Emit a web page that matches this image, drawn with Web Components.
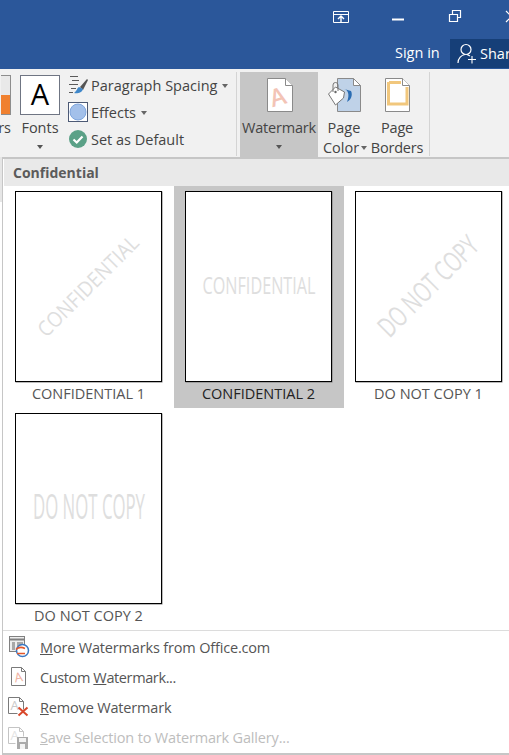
<!DOCTYPE html>
<html lang="en"><head><meta charset="utf-8"><title>Watermark</title>
<style>
html,body{margin:0;padding:0;height:755px;width:509px;overflow:hidden;background:#fff;font-family:"Open Sans","Noto Sans",sans-serif;color:#444}
</style></head><body>
<app-shell>
  <title-bar></title-bar>
  <ribbon-bar></ribbon-bar>
  <wm-menu>
    <wm-thumb slot="gallery" label="CONFIDENTIAL 1" text="CONFIDENTIAL" diag></wm-thumb>
    <wm-thumb slot="gallery" label="CONFIDENTIAL 2" text="CONFIDENTIAL" selected></wm-thumb>
    <wm-thumb slot="gallery" label="DO NOT COPY 1" text="DO NOT COPY" diag></wm-thumb>
    <wm-thumb slot="gallery" label="DO NOT COPY 2" text="DO NOT COPY"></wm-thumb>
    <menu-row slot="items" icon="more"><u>M</u>ore Watermarks from Office.com</menu-row>
    <menu-row slot="items" icon="custom" style="letter-spacing:-.38px">Custom <u>W</u>atermark...</menu-row>
    <menu-row slot="items" icon="remove"><u>R</u>emove Watermark</menu-row>
    <menu-row slot="items" icon="save" disabled><u>S</u>ave Selection to Watermark Gallery...</menu-row>
  </wm-menu>
</app-shell>
<script>
function def(name,html){
  customElements.define(name,class extends HTMLElement{
    connectedCallback(){
      if(this.shadowRoot)return;
      const r=this.attachShadow({mode:'open'});
      r.innerHTML=typeof html==='function'?html(this):html;
    }
  });
}
def('app-shell',`<style>:host{display:flex;flex-direction:column;width:509px;height:755px;overflow:hidden;background:linear-gradient(#e6e6e6 202px,#fff 202px)}</style><slot></slot>`);

def('title-bar',`<style>
:host{display:flex;flex-direction:column;height:69px;background:#2b579a;color:#fff;flex:none;overflow:hidden}
.ctl{height:39px;display:flex;align-items:flex-start;flex:none}
.ctl svg{display:block;flex:none}
.acc{height:29px;display:flex;align-items:stretch;padding-left:395px;flex:none}
.sign{width:55px;font-size:14.5px;line-height:28px;white-space:nowrap}
.share{width:59px;background:#163f78;display:flex;align-items:center;overflow:hidden;font-size:14.5px;white-space:nowrap;padding-left:7px;box-sizing:border-box;gap:3px}
.share svg{flex:none}
</style>
<div class="ctl">
<svg width="509" height="39" viewBox="0 0 509 39" fill="none" stroke="#fff">
<path d="M333.500 11.500h15v11h-15zM333.500 14.500h15" stroke-width="1"/>
<path d="M341 22v-6M338 19l3-3 3 3" stroke-width="1.400"/>
<path d="M392 19.500h12" stroke-width="2"/>
<path d="M449.500 14.500h8v7h-8zM452.500 14v-3.500h8v7H458" stroke-width="1.200"/>
<path d="M506 11l11 11M517 11l-11 11" stroke-width="1.200"/>
</svg></div>
<div class="acc"><div class="sign">Sign in</div>
<div class="share"><svg width="20" height="21" viewBox="0 0 20 21" fill="none" stroke="#fff" stroke-width="1.200"><circle cx="9" cy="6.500" r="5"/><path d="M1 20c0-5 3.500-8 7-8.500M10 11.500l3 1.500"/><path d="M11 16.500h8M15 13v7.500" stroke-width="1.100"/></svg><span>Share</span></div></div>`);

def('ribbon-bar',`<style>
:host{display:flex;height:88px;flex:none;background:#f1f1f1;box-sizing:border-box;padding-top:3px;color:#444;overflow:hidden;font-size:14.5px}
.colors{width:11px;flex:none;display:flex;flex-direction:column;align-items:flex-end}
.sw{width:10px;height:40px;margin:3px 0 0;box-sizing:border-box;border:1px solid #8d8d8d;border-left:0;background:linear-gradient(#e9e9e9 50%,#f0802f 50%);flex:none}
.colors span{line-height:20px;margin-top:3px}
.fonts{margin-left:9px;width:40px}
.fontbox{width:40px;height:40px;box-sizing:border-box;border:1px solid #6f7583;background:#fff;color:#000;font-size:29px;line-height:36px;text-align:center}
.list{margin-left:8px;width:168px;flex:none}
.sep{width:1px;height:84px;background:#d4d4d4;flex:none}
.wm{margin-left:3px;width:78px;background:#c6c6c6;letter-spacing:-.2px}
.pc{width:52px}.pb{width:50px;margin-left:2px;letter-spacing:-.2px}
</style>
<div class="colors"><div class="sw"></div><span>rs</span></div>
<rb-btn class="fonts" caret2 top="3"><div class="fontbox" slot="icon">A</div>Fonts</rb-btn>
<div class="list">
<small-btn icon="para" caret>Paragraph Spacing</small-btn>
<small-btn icon="fx" caret>Effects</small-btn>
<small-btn icon="def">Set as Default</small-btn>
</div>
<div class="sep"></div>
<rb-btn class="wm" caret2 top="6"><svg slot="icon" width="34" height="34" viewBox="0 0 34 34"><path d="M5.500.5h18l7 7v26h-25z" fill="#fff" stroke="#8a8a8a"/><path d="M23.500.5v7h7" fill="#fff" stroke="#8a8a8a"/><text x="16" y="27" font-family="Open Sans" font-size="24" fill="#f3c4b6" font-weight="600" transform="rotate(-16 17 20)" text-anchor="middle">A</text></svg>Watermark</rb-btn>
<rb-btn class="pc" top="6"><svg slot="icon" width="40" height="34" viewBox="0 0 40 34"><path d="M13.500.5h16l7 7v26h-23z" fill="#bfd2e8" stroke="#8a8a8a"/><path d="M29.500.5v7h7z" fill="#fff" stroke="#8a8a8a"/><path d="M20 11c4 1 6 5 3 13 4-2 6-7 4-11z" fill="#2b6db3"/><path d="M4.500 16l7-7 9 5-1 6-8 7z" fill="#fff" stroke="#777"/><path d="M9 14V7a2.500 2.500 0 0 1 5 0v6" fill="none" stroke="#777"/><circle cx="11.500" cy="14" r="1.200" fill="#666"/></svg>Page<br>Color<i style="display:inline-block;width:0;height:0;border:3.500px solid transparent;border-top:4px solid #666;border-bottom:0;margin-left:2px;margin-right:-2px;vertical-align:3px"></i></rb-btn>
<rb-btn class="pb" top="6"><svg slot="icon" width="27" height="34" viewBox="0 0 27 34"><path d="M1.500.5h17l7 7v26h-24z" fill="#fff" stroke="#8a8a8a"/><path d="M18.500.5v7h7" fill="#fff" stroke="#8a8a8a"/><path d="M5 4.500h12M23 9v17H4.500V4" fill="none" stroke="#f1c77d" stroke-width="3"/></svg>Page<br>Borders</rb-btn>
<div class="sep" style="margin-left:7px"></div>`);

def('rb-btn',el=>`<style>
:host{display:flex;flex-direction:column;align-items:center;flex:none;height:85px;box-sizing:border-box;padding-top:${el.getAttribute('top')||6}px;text-align:center;line-height:20px;white-space:nowrap}
.i{height:${el.getAttribute('top')==='3'?43:40}px;flex:none;display:block}
.i ::slotted(svg){display:block}
.t{display:block}
.c{display:block;width:0;height:0;border:3.500px solid transparent;border-top:4px solid #555;border-bottom:0;margin-top:7px}
</style><span class="i"><slot name="icon"></slot></span><span class="t"><slot></slot></span>${el.hasAttribute('caret2')?'<span class="c"></span>':''}`);

const smallIcons={
para:`<svg width="21" height="22" viewBox="0 0 21 22"><path d="M2 1.500h8M4 5.500h7M1 9.500h9M3 13.500h5M1 17.500h4" stroke="#5a5a5a" fill="none"/><path d="M12 12l7-8 1 1-5 10z" fill="#555"/><path d="M11 12c-2 1-2 4-5 6 3 1 8 0 9-4z" fill="#3f87c9"/></svg>`,
fx:`<svg width="21" height="21" viewBox="0 0 21 21"><rect x=".5" y=".5" width="19" height="19" fill="#fff" stroke="#4d5a75"/><circle cx="10" cy="10" r="8" fill="#a3c0ea" stroke="#7ea5dd"/></svg>`,
def:`<svg width="21" height="21" viewBox="0 0 21 21"><circle cx="10" cy="10" r="9" fill="#5ba187"/><path d="M5.500 10.500l3.200 3 5.800-6" fill="none" stroke="#fff" stroke-width="2.200"/></svg>`};
def('small-btn',el=>`<style>
:host{display:flex;align-items:center;height:27px;gap:2px;white-space:nowrap;font-size:14.5px}
svg{display:block;flex:none}.ic{width:21px;flex:none}
.c{width:0;height:0;border:3.500px solid transparent;border-top:4px solid #666;border-bottom:0;margin-left:3px}
</style><span class="ic">${smallIcons[el.getAttribute('icon')]}</span><span><slot></slot></span>${el.hasAttribute('caret')?'<span class="c"></span>':''}`);

def('wm-menu',`<style>
:host{display:flex;flex-direction:column;flex:1;min-height:0;background:#fff;margin-left:2px;border-left:1px solid #c6c6c6;border-top:2px solid #c6c6c6;border-bottom:2px solid #c6c6c6;width:600px;box-sizing:border-box;color:#444}
.h{height:27px;background:#e9e9e9;font-weight:700;font-size:14px;line-height:27px;padding-left:9px;color:#5b5b5b;margin-left:1px;box-sizing:border-box;flex:none}
.g{display:grid;grid-template-columns:repeat(3,170px);grid-auto-rows:222px;padding-left:1px;flex:none;height:444px}
.s{height:1px;background:#dcdcdc;flex:none}
.l{padding-top:1px;flex:none}
</style><div class="h">Confidential</div><div class="g"><slot name="gallery"></slot></div><div class="s"></div><div class="l"><slot name="items"></slot></div>`);

def('wm-thumb',el=>{
  const t=el.getAttribute('text'),d=el.hasAttribute('diag'),conf=t[0]==='C';
  const fs=conf?(d?21:24):(d?28:35),len=conf?(d?133:113):(d?129:112);
  const cy=d?94:(conf?93:92),cx=d?72:73;
  const tr=d?` transform="rotate(-45 ${cx} ${cy})"`:'';
  return `<style>
:host{display:block;box-sizing:border-box;padding:5px 0 0 11px;height:222px;width:170px;${el.hasAttribute('selected')?'background:#c6c6c6;color:#222;':'color:#555;'}}
.p{width:147px;height:191px;box-sizing:border-box;border:1px solid #000;background:#fff;box-shadow:.5px .5px 0 #777}
svg{display:block;overflow:visible}
.l{width:147px;font-size:14.5px;line-height:22px;white-space:nowrap;margin-top:1px;display:flex;justify-content:center}
</style><div class="p"><svg width="145" height="189" viewBox="0 0 145 189"><text x="${cx}" y="${cy+fs*.36}" text-anchor="middle" font-family="Open Sans" font-size="${fs}" fill="#dedede" textLength="${len}" lengthAdjust="spacingAndGlyphs"${tr}>${t}</text></svg></div><div class="l">${el.getAttribute('label')}</div>`;
});

const rowIcons={
more:`<svg width="22" height="22" viewBox="0 0 22 22"><rect x="1.500" y=".5" width="15" height="15" fill="#eee" stroke="#808080"/><path d="M2 3.500h14" stroke="#808080" stroke-width="2"/><path d="M4 6h3v8H4zM9 6h6v6H9z" fill="#a8a8a8"/><circle cx="14.500" cy="14.500" r="6" fill="#fff" stroke="#3a78c2" stroke-width="1.500"/><path d="M8 13.500c2-2 5-3 9-1M9 17.500h8" stroke="#e2572b" fill="none" stroke-width="1.500"/></svg>`,
custom:`<svg width="22" height="22" viewBox="0 0 22 22"><path d="M3.500 1.500h10l4 4v14h-14z" fill="#fff" stroke="#7a7a7a"/><path d="M13.500 1.500v4h4" fill="none" stroke="#7a7a7a"/><text x="10.500" y="16" font-family="Open Sans" font-size="13" fill="#f0b09e" text-anchor="middle" transform="rotate(-10 10 12)">A</text></svg>`,
remove:`<svg width="22" height="24" viewBox="0 0 22 24"><path d="M.5 2.500h11l4 4v8M.5 2.500v16h9M11.500 2.500v4h4" fill="none" stroke="#7a7a7a"/><text x="6.500" y="15" font-family="Open Sans" font-size="13" fill="#c9c9c9" text-anchor="middle">A</text><path d="M10.500 12.500l9 8M19.500 12.500l-9 8" stroke="#d9482b" stroke-width="2"/></svg>`,
save:`<svg width="22" height="24" viewBox="0 0 22 24"><path d="M.5 2.500h11l4 4v5M.5 2.500v16h7M11.500 2.500v4h4" fill="none" stroke="#c4c4c4"/><text x="6.500" y="15" font-family="Open Sans" font-size="13" fill="#e3e3e3" text-anchor="middle">A</text><path d="M9 12h11v12H9z" fill="#aaa"/><path d="M11 13h7v4h-7zM12 19h5v5h-5z" fill="#f3f3f3"/></svg>`};
def('menu-row',el=>`<style>
:host{display:flex;align-items:center;height:30px;white-space:nowrap;font-size:14.5px;letter-spacing:-.17px;color:${el.hasAttribute('disabled')?'#bdbdbd':'#555'}}
.ic{width:37px;flex:none;padding-left:5px;box-sizing:border-box}
svg{display:block}
</style><span class="ic">${rowIcons[el.getAttribute('icon')]}</span><span><slot></slot></span>`);
</script>
</body></html>
